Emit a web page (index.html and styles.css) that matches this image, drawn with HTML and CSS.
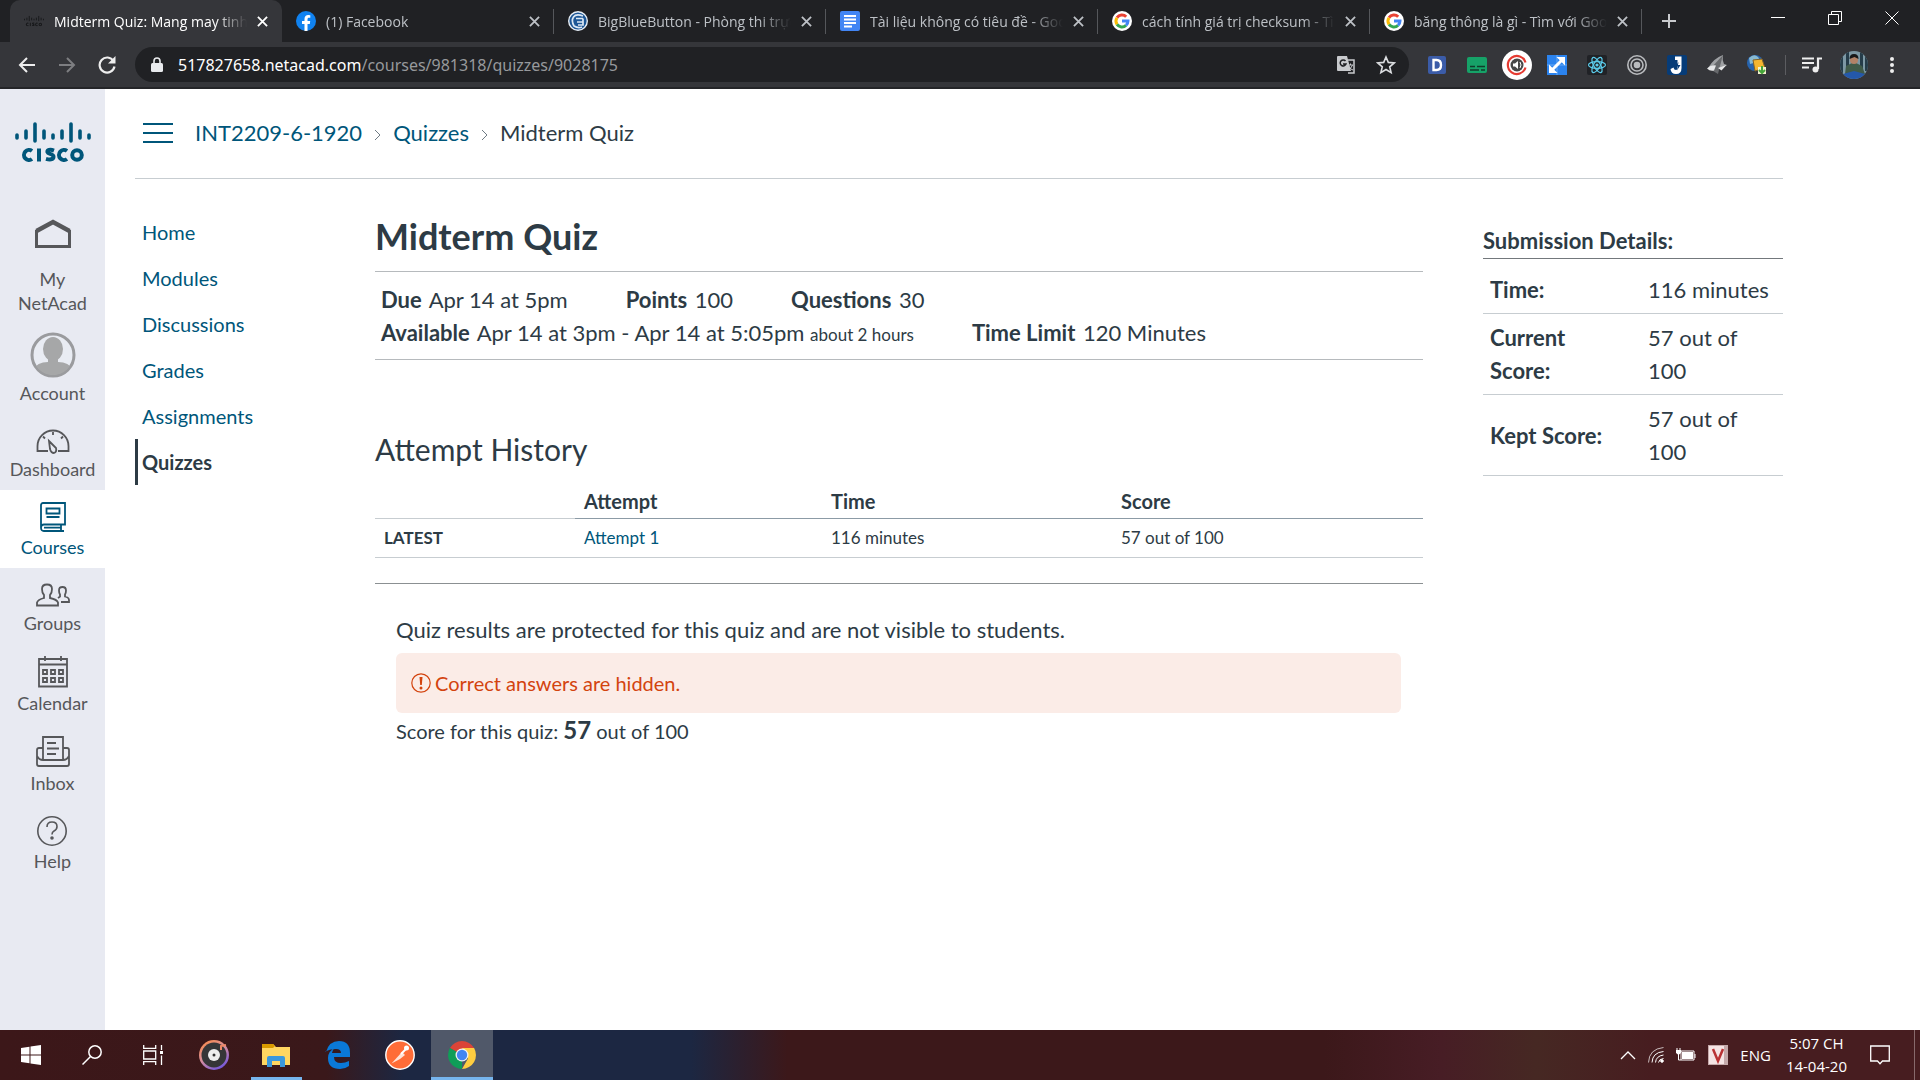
FILE: index.html
```html
<!DOCTYPE html>
<html lang="en">
<head>
<meta charset="utf-8">
<title>Midterm Quiz: Mang may tinh</title>
<link rel="stylesheet" href="styles.css">
</head>
<body>
<svg class="sprite" aria-hidden="true">
  <symbol id="close" viewBox="0 0 12 12"><path d="M1 1l10 10M11 1L1 11" stroke="currentColor" stroke-width="2" fill="none"/></symbol>
  <symbol id="google" viewBox="0 0 20 20"><circle cx="10" cy="10" r="10" fill="#fff"/><g fill="none" stroke-width="3"><path d="M5 6.7A6 6 0 0 1 14.2 5.8" stroke="#ea4335"/><path d="M5 13.3A6 6 0 0 1 5 6.7" stroke="#fbbc05"/><path d="M14 14.4A6 6 0 0 1 5 13.3" stroke="#34a853"/><path d="M10 10h6a6 6 0 0 1-2 4.4" stroke="#4285f4"/></g></symbol>
  <symbol id="cisco" viewBox="0 0 76 40"><g stroke="currentColor" stroke-width="3.6" stroke-linecap="round"><path d="M2 13v3M11 9v7M20 2v17M29 9v7M38 13v3M47 9v7M56 2v17M65 9v7M74 13v3"/></g><g fill="none" stroke="currentColor" stroke-width="4"><path d="M17 29a5 5 0 1 0 0 8M24 26.500v13M39 28.600c-4-1.500-7-.6-6.500 1.600.6 2 6 1.600 6 4.600 0 3-4 3-7.500 2M52 29a5 5 0 1 0 0 8"/><circle cx="62" cy="33" r="4.800"/></g></symbol>
</svg>

<header class="browser">
  <div class="tabs">
    <div class="tab tab-active"><svg class="favicon dim" viewBox="0 0 76 40"><use href="#cisco"/></svg><span class="tab-title">Midterm Quiz: Mang may tinh</span><button class="tab-close" aria-label="Close tab"><svg><use href="#close"/></svg></button></div>
    <div class="tab"><svg class="favicon" viewBox="0 0 20 20"><circle cx="10" cy="10" r="10" fill="#1082f0"/><path d="M8.500 20v-7H6v-3h2.500V8c0-2.600 1.500-4 3.800-4l2 .2v2.500h-1.200c-1.200 0-1.600.7-1.600 1.500V10h2.700l-.4 3h-2.300v7z" fill="#fff"/></svg><span class="tab-title">(1) Facebook</span><button class="tab-close" aria-label="Close tab"><svg><use href="#close"/></svg></button></div>
    <div class="tab"><svg class="favicon" viewBox="0 0 20 20"><circle cx="10" cy="10" r="9.300" fill="#1d5796" stroke="#e8eef5" stroke-width="1.400"/><path d="M15 5Q8 2.500 5.500 6T6 15q4 2.500 8 1M8 7.500h7M9 11h6M15 7.500V14h-5" fill="none" stroke="#dce8f4" stroke-width="1.700"/></svg><span class="tab-title">BigBlueButton - Phòng thi trực tuyến</span><button class="tab-close" aria-label="Close tab"><svg><use href="#close"/></svg></button></div>
    <div class="tab"><svg class="favicon" viewBox="0 0 20 20"><rect width="20" height="20" rx="2" fill="#4285f4"/><path d="M4 5h12M4 8.500h12M4 12h12M4 15.500h8" stroke="#fff" stroke-width="2"/></svg><span class="tab-title">Tài liệu không có tiêu đề - Google Tài liệu</span><button class="tab-close" aria-label="Close tab"><svg><use href="#close"/></svg></button></div>
    <div class="tab"><svg class="favicon"><use href="#google"/></svg><span class="tab-title">cách tính giá trị checksum - Tìm với Google</span><button class="tab-close" aria-label="Close tab"><svg><use href="#close"/></svg></button></div>
    <div class="tab"><svg class="favicon"><use href="#google"/></svg><span class="tab-title">băng thông là gì - Tìm với Google</span><button class="tab-close" aria-label="Close tab"><svg><use href="#close"/></svg></button></div>
    <button class="new-tab" aria-label="New tab"><svg width="16" height="16" viewBox="0 0 16 16"><path d="M8 1v14M1 8h14" stroke="currentColor" stroke-width="2"/></svg></button>
    <div class="window-controls">
      <button aria-label="Minimize"><svg width="14" height="14" viewBox="0 0 14 14"><path d="M0 6.500h14" stroke="currentColor"/></svg></button>
      <button aria-label="Restore"><svg width="14" height="14" viewBox="0 0 14 14"><path d="M.5 3.500h10v10H.5zM3.500 3.500v-3h10v10h-3" fill="none" stroke="currentColor"/></svg></button>
      <button aria-label="Close"><svg width="14" height="14" viewBox="0 0 14 14"><path d="M.5.5l13 13M13.500.5l-13 13" stroke="currentColor"/></svg></button>
    </div>
  </div>
  <div class="toolbar">
    <button class="nav-button" aria-label="Back"><svg width="18" height="18" viewBox="0 0 18 18"><path d="M17 9H2M9 2L2 9l7 7" fill="none" stroke="currentColor" stroke-width="2"/></svg></button>
    <button class="nav-button faded" aria-label="Forward"><svg width="18" height="18" viewBox="0 0 18 18"><path d="M1 9h15M9 2l7 7-7 7" fill="none" stroke="currentColor" stroke-width="2"/></svg></button>
    <button class="nav-button" aria-label="Reload"><svg width="18" height="18" viewBox="0 0 18 18"><path d="M15.500 5A7.500 7.500 0 1 0 16.500 10.500" fill="none" stroke="currentColor" stroke-width="2.200"/><path d="M17.500 0v7.500H10z" fill="currentColor"/></svg></button>
    <div class="omnibox">
      <svg width="12" height="16" viewBox="0 0 12 16"><rect y="6" width="12" height="9" rx="1.500" fill="#e8eaed"/><path d="M3 7V4a3 3 0 0 1 6 0v3" fill="none" stroke="#e8eaed" stroke-width="1.600"/></svg>
      <span class="url"><b>517827658.netacad.com</b>/courses/981318/quizzes/9028175</span>
      <button aria-label="Translate this page"><svg width="20" height="20" viewBox="0 0 20 20"><path d="M2 1h9l4 15H2a1 1 0 0 1-1-1V2a1 1 0 0 1 1-1z" fill="#c8cacd"/><path d="M12 5h6v13h-6" fill="none" stroke="#c8cacd" stroke-width="1.500"/><path d="M9.500 6A3 3 0 1 0 10 9H7" fill="none" stroke="#202124" stroke-width="1.500"/><path d="M12 10h5M14.500 8.500V10M16.500 10q-1 3-4 5M13 11.500q1.500 3 4 3.500" fill="none" stroke="#c8cacd"/></svg></button>
      <button aria-label="Bookmark this tab"><svg width="20" height="20" viewBox="0 0 20 20"><path d="M10 2l2.300 5.400 5.900.5-4.500 3.900 1.400 5.800-5.100-3.100-5.100 3.100 1.400-5.800L1.800 7.900l5.900-.5z" fill="none" stroke="#dcdee1" stroke-width="1.600"/></svg></button>
    </div>
    <div class="extensions">
      <button aria-label="Dictionary"><svg viewBox="0 0 30 30"><rect x="6" y="6" width="18" height="18" rx="2" fill="#3b5ca8"/><path d="M11.500 10h3q4.500 0 4.500 5t-4.500 5h-3z" fill="none" stroke="#fff" stroke-width="2.400"/></svg></button>
      <button aria-label="Subtitles"><svg viewBox="0 0 30 30"><rect x="5" y="7" width="20" height="16" rx="2" fill="#16a268"/><path d="M8 16.500h5M15 16.500h8M8 20h9M19 20h4" stroke="#113c2b" stroke-width="1.500"/></svg></button>
      <button aria-label="Volume"><svg viewBox="0 0 30 30"><circle cx="15" cy="15" r="15" fill="#fff"/><circle cx="15" cy="15" r="6.500" fill="#484848"/><path d="M23.500 12.500a9 9 0 1 0 0 5" fill="none" stroke="#e53b32" stroke-width="2.200"/><path d="M11 13.500h2l3-2.500v8l-3-2.500h-2z" fill="#fff"/><path d="M18 12q2 3 0 6" fill="none" stroke="#fff"/></svg></button>
      <button aria-label="Resize"><svg viewBox="0 0 30 30"><rect x="5" y="5" width="20" height="20" fill="#2b83ee"/><path d="M15 5v20M5 15h20" stroke="#69aaf5"/><path d="M10.500 19.500l9-9" stroke="#fff" stroke-width="3"/><path d="M14.500 7H23v8.500zM7 14.500V23h8.500z" fill="#fff"/></svg></button>
      <button aria-label="React tools"><svg viewBox="0 0 30 30"><rect x="5" y="5" width="20" height="20" rx="2" fill="#202226"/><g fill="none" stroke="#5ccdec" stroke-width="1.200"><ellipse cx="15" cy="15" rx="8.500" ry="3.300"/><ellipse cx="15" cy="15" rx="8.500" ry="3.300" transform="rotate(60 15 15)"/><ellipse cx="15" cy="15" rx="8.500" ry="3.300" transform="rotate(120 15 15)"/></g><circle cx="15" cy="15" r="1.600" fill="#5ccdec"/></svg></button>
      <button aria-label="Recorder"><svg viewBox="0 0 30 30" fill="none" stroke="#b9bbbe" stroke-width="1.600"><circle cx="15" cy="15" r="9.200"/><circle cx="15" cy="15" r="6"/><circle cx="15" cy="15" r="2.500" fill="#b9bbbe"/></svg></button>
      <button aria-label="Downloader"><svg viewBox="0 0 30 30"><rect x="5" y="5" width="20" height="20" rx="2" fill="#063c78"/><path d="M13 6.500h6.500V18q0 6-5.500 6-5 0-5.500-5l3-1.500q.5 2.500 2.500 2.500 1.500 0 1.500-2V10H13z" fill="#fff"/><path d="M16.500 12l-3 4.500h2.500l-1 4 3.500-5.500H16z" fill="#063c78"/></svg></button>
      <button aria-label="Clipper"><svg viewBox="0 0 30 30"><path d="M6 18Q12 8 21 5q-1 5 1 9l3 1-6 4z" fill="#9fa1a4"/><path d="M10 17l11-12-3 11-2 8-5-3z" fill="#67696c"/><path d="M5 18.500q4-4 9-3l-2 5q-4 1-7-2zM16 18l8.500-3-5 5.500z" fill="#e6e7e8"/></svg></button>
      <button aria-label="Download manager"><svg viewBox="0 0 30 30"><circle cx="13" cy="13" r="8" fill="#2764ae"/><path d="M7 8q5-5 9-1t-8 7z" fill="#89b9cf"/><path d="M11 10l9-1 3 9-10 3z" fill="#f5b62f" stroke="#806128"/><path d="M16 17h8v7h-8z" fill="#f5f1cf"/><path d="M20 16v6M17 20l3 3 3-3" fill="none" stroke="#45a639" stroke-width="2"/></svg></button>
    </div>
    <div class="profile">
      <button aria-label="Media controls"><svg width="22" height="20" viewBox="0 0 22 20"><path d="M1 3.500h12M1 8h12M1 12.500h7M17 14V3.500h4" fill="none" stroke="#eee" stroke-width="2.200"/><circle cx="14.500" cy="14.500" r="3" fill="#eee"/></svg></button>
      <button aria-label="Profile"><svg width="28" height="28" viewBox="0 0 28 28"><clipPath id="round"><circle cx="14" cy="14" r="14"/></clipPath><g clip-path="url(#round)"><path d="M0 0h28v28H0z" fill="#7d98a4"/><path d="M0 0h3v28H0zM6 0h3v16H6zM20 0h3v20h-3zM25 0h3v20h-3z" fill="#253c49"/><path d="M6 15l8-4 8 4 3 8H5z" fill="#405b49"/><circle cx="14" cy="9" r="4" fill="#b28267"/><path d="M9.500 8q0-5 4.500-5t4.500 5l-4-2z" fill="#171819"/><path d="M3 23l11-3 11 3-3 5H6z" fill="#2458aa"/></g></svg></button>
      <button aria-label="Menu"><svg width="6" height="18" viewBox="0 0 6 18" fill="#eee"><circle cx="3" cy="3" r="2"/><circle cx="3" cy="9" r="2"/><circle cx="3" cy="15" r="2"/></svg></button>
    </div>
  </div>
</header>

<div class="page">
  <nav class="global-nav" aria-label="Global">
    <a class="logo" href="#" aria-label="Cisco"><svg width="76" height="40"><use href="#cisco"/></svg></a>
    <a class="nav-item nav-home" href="#"><svg width="36" height="30" viewBox="0 0 36 30" fill="none" stroke="currentColor"><path d="M1.500 11v16.500h33V11" stroke-width="3"/><path d="M1.500 12L18 3l16.500 9" stroke-width="4.500"/></svg>My NetAcad</a>
    <a class="nav-item" href="#"><svg width="46" height="46" viewBox="0 0 46 46"><clipPath id="person"><circle cx="23" cy="23" r="20"/></clipPath><circle cx="23" cy="23" r="21" fill="#e9ecf3" stroke="#9a9b9e" stroke-width="3"/><g fill="#a6a7a8" clip-path="url(#person)"><ellipse cx="23" cy="17" rx="10" ry="12"/><path d="M18 26h10v4q11 0 15 8L35 46H10L3 38q4-8 15-8z"/></g></svg>Account</a>
    <a class="nav-item" href="#"><svg width="34" height="28" viewBox="0 0 34 28" fill="none" stroke="currentColor" stroke-width="1.800"><path d="M12 25H1.500v-5a15.500 15.500 0 0 1 31 0v5H22M17 6v3M7 10.500l2 2M27 10.500l-2 2M13 15l7 7q1 4-2 5-3 0-4-4z"/></svg>Dashboard</a>
    <a class="nav-item nav-current" href="#" aria-current="true"><svg width="26" height="30" viewBox="0 0 26 30" fill="none" stroke="currentColor" stroke-width="1.800"><path d="M1 25.500V3a2 2 0 0 1 2-2h22v21.500H4q-3 0-3 3.300T4 29h20M4 25.700h17M21 22.500V29M6.500 6.500h13v5h-13zM6.500 15h13"/></svg>Courses</a>
    <a class="nav-item" href="#"><svg width="34" height="28" viewBox="0 0 34 28" fill="none" stroke="currentColor" stroke-width="1.800"><path d="M1 25.500v-3q1-3 7-4.500v-3q-2-2-2-6 0-4.500 5-4.500t5 4.500q0 4-2 6v3q7 1.500 8 4.500v3zM22 18l2-1.500v-2q-1-1.500-1-4 0-3.500 3.500-3.500t3.500 3.500q0 2.500-1 4v2q4 1 4 3.500v2h-8"/></svg>Groups</a>
    <a class="nav-item" href="#"><svg width="30" height="32" viewBox="0 0 30 32" fill="none" stroke="currentColor" stroke-width="1.800"><path d="M1 3h28v27.500H1zM1 8.500h28M7 0v5M23 0v5M5 14h4v4H5zM13 14h4v4h-4zM21 14h4v4h-4zM5 22h4v4H5zM13 22h4v4h-4zM21 22h4v4h-4z"/></svg>Calendar</a>
    <a class="nav-item" href="#"><svg width="34" height="32" viewBox="0 0 34 32" fill="none" stroke="currentColor" stroke-width="1.800"><path d="M7 24V1h20v23zM11 7h9M11 12.500h12M11 18h9M7 12H3q-2 0-2 2v14q0 2 2 2h28q2 0 2-2V14q0-2-2-2h-4M1 20q2 4 6 4M33 20q-2 4-6 4"/></svg>Inbox</a>
    <a class="nav-item" href="#"><svg width="32" height="30" viewBox="0 0 32 30" fill="none" stroke="currentColor" stroke-width="1.600"><circle cx="15" cy="15" r="14.200"/><path d="M10 11q0-5 5-5t5 4.500q0 3-3 4.500-2 1-2 3.500"/><circle cx="15" cy="22" r="1" fill="currentColor"/></svg>Help</a>
  </nav>

  <div class="content">
    <div class="crumb-bar">
      <button class="menu-toggle" aria-label="Course navigation"><svg width="30" height="20" viewBox="0 0 30 20"><path d="M0 1h30M0 10h30M0 19h30" stroke="currentColor" stroke-width="2"/></svg></button>
      <nav class="crumbs" aria-label="Breadcrumbs"><a href="#">INT2209-6-1920</a><svg viewBox="0 0 7 12"><path d="M1 1l5 5-5 5"/></svg><a href="#">Quizzes</a><svg viewBox="0 0 7 12"><path d="M1 1l5 5-5 5"/></svg><span>Midterm Quiz</span></nav>
    </div>
    <div class="columns">
      <nav class="course-menu" aria-label="Course"><a href="#">Home</a><a href="#">Modules</a><a href="#">Discussions</a><a href="#">Grades</a><a href="#">Assignments</a><a class="selected" href="#">Quizzes</a></nav>
      <main class="quiz">
        <h1>Midterm Quiz</h1>
        <ul class="details">
          <li><b>Due</b> Apr 14 at 5pm</li><li><b>Points</b> 100</li><li><b>Questions</b> 30</li>
          <li class="row-start"><b>Available</b> Apr 14 at 3pm - Apr 14 at 5:05pm <small>about 2 hours</small></li><li><b>Time Limit</b> 120 Minutes</li>
        </ul>
        <h2>Attempt History</h2>
        <table class="attempts">
          <thead><tr><td></td><th scope="col">Attempt</th><th scope="col">Time</th><th scope="col">Score</th></tr></thead>
          <tbody><tr><th scope="row">LATEST</th><td><a href="#">Attempt 1</a></td><td>116 minutes</td><td>57 out of 100</td></tr></tbody>
        </table>
        <section class="results">
          <p class="notice">Quiz results are protected for this quiz and are not visible to students.</p>
          <p class="alert"><svg width="20" height="20" viewBox="0 0 20 20"><circle cx="10" cy="10" r="9.200" fill="none" stroke="currentColor" stroke-width="1.200"/><path d="M8.500 4h3l-.7 8H9.200z" fill="currentColor"/><circle cx="10" cy="15" r="1.500" fill="currentColor"/></svg>Correct answers are hidden.</p>
          <p class="score">Score for this quiz: <b>57</b> out of 100</p>
        </section>
      </main>
      <aside class="submission">
        <h3>Submission Details:</h3>
        <table><tbody>
          <tr><th scope="row">Time:</th><td>116 minutes</td></tr>
          <tr><th scope="row">Current Score:</th><td>57 out of 100</td></tr>
          <tr><th scope="row">Kept Score:</th><td>57 out of 100</td></tr>
        </tbody></table>
      </aside>
    </div>
  </div>
</div>

<footer class="taskbar">
  <div class="apps">
    <button class="system" aria-label="Start"><svg width="20" height="20" viewBox="0 0 20 20" fill="#fff"><path d="M0 3l8.500-1.200V9.500H0zM9.500 1.600L20 0v9.500H9.500zM0 10.500h8.500v7.700L0 17zM9.500 10.500H20V20L9.500 18.400z"/></svg></button>
    <button class="system" aria-label="Search"><svg width="20" height="20" viewBox="0 0 20 20" fill="none" stroke="#fff" stroke-width="1.500"><circle cx="13" cy="7" r="6.200"/><path d="M8.500 11.500L.5 19.500"/></svg></button>
    <button class="system" aria-label="Task view"><svg width="20" height="20" viewBox="0 0 20 20" fill="none" stroke="#fff" stroke-width="1.300"><path d="M.7 0v3.300h12V0M.7 6h12v8H.7zM.7 20v-3.300h12V20M18.500 0v5M18.500 10.500V20"/><path d="M17 6h3v3h-3z" fill="#fff" stroke="none"/></svg></button>
    <button aria-label="Music"><svg width="30" height="30" viewBox="0 0 30 30"><linearGradient id="ring" x2=".6" y2="1"><stop stop-color="#ff8a3c"/><stop offset=".55" stop-color="#d78fa0"/><stop offset="1" stop-color="#7759d8"/></linearGradient><circle cx="15" cy="15" r="15" fill="url(#ring)"/><circle cx="15" cy="15" r="12.500" fill="#353638"/><path d="M22 10V6l5-1" fill="none" stroke="#ee8866" stroke-width="2"/><circle cx="15" cy="15" r="6" fill="#eee"/><circle cx="15" cy="15" r="1.500" fill="#333"/></svg></button>
    <button class="running" aria-label="File Explorer"><svg width="28" height="24" viewBox="0 0 28 24"><path d="M0 1h11l3 3h14v18H0z" fill="#ffd661"/><path d="M0 1h11l2 2-2 2H0z" fill="#d99a00"/><path d="M5 24V15q0-2 2-2h14q2 0 2 2v9h-5v-6h-8v6z" fill="#3b98dc"/></svg></button>
    <button aria-label="Edge"><svg width="26" height="28" viewBox="0 0 26 28"><path d="M1 11Q4 0 14 0q11 0 11 12v4H9q0 6 7 6 4 0 8-2v5q-4 3-9 3-12 0-12-11 0-7 7-10-3 2-3 5h9q0-4-5-4-7 0-11 3z" fill="#0a79d8"/></svg></button>
    <button aria-label="Postman"><svg width="30" height="30" viewBox="0 0 30 30"><circle cx="15" cy="15" r="14.200" fill="#ff6c37" stroke="#fff" stroke-width="1.400"/><path d="M6.500 23.500L17 12l3 3-5 4z" fill="#ffe3d8"/><path d="M16 14l6-6" stroke="#fff" stroke-width="2"/><circle cx="21.500" cy="8" r="2.500" fill="#fff"/></svg></button>
    <button class="focused" aria-label="Chrome"><svg width="28" height="28" viewBox="0 0 28 28"><path d="M14 14L1.900 7A14 14 0 0 1 26.100 7z" fill="#db4437"/><path d="M14 14V28A14 14 0 0 1 1.900 7z" fill="#0f9d58"/><path d="M14 7h12.100A14 14 0 0 1 14 28l6-10.500z" fill="#ffcd40"/><circle cx="14" cy="14" r="6.500" fill="#f1f1f1"/><circle cx="14" cy="14" r="5.200" fill="#4285f4"/></svg></button>
  </div>
  <div class="tray">
    <svg width="16" height="10" viewBox="0 0 16 10" fill="none" stroke="#fff" stroke-width="1.300"><path d="M1 9l7-7 7 7"/></svg>
    <svg width="16" height="16" viewBox="0 0 16 16" fill="none" stroke="#fff"><path d="M.5 15.500Q1 2 15.500.5" opacity=".7"/><path d="M4 15.500Q4.500 5.500 15.500 4.500M7.500 15.500Q8 9 15.500 8M10.500 15.500Q11 12 15.500 11.500"/><circle cx="14" cy="14" r="1.300" fill="#fff"/></svg>
    <svg width="20" height="14" viewBox="0 0 20 14"><path d="M5 3h13v9H5zM19 6v4" fill="none" stroke="#fff"/><path d="M6 4h11v7H6z" fill="#fff"/><path d="M0 2h5v3L2.500 7 0 5z" fill="#fff"/><path d="M1 0v3M4 0v3M2.500 6v6H5" fill="none" stroke="#fff"/></svg>
    <svg width="20" height="20" viewBox="0 0 20 20"><rect width="20" height="20" fill="#c5a9aa"/><path d="M1 1h15v18H1z" fill="#f5e4e4"/><path d="M5 4l5 12 5-12" fill="none" stroke="#b93234" stroke-width="2.500"/></svg>
    <span>ENG</span>
    <time class="clock">5:07 CH<br>14-04-20</time>
    <svg width="20" height="20" viewBox="0 0 20 20"><path d="M.7 1h18.600v15h-6.800L10 18.700 7.500 16H.7z" fill="none" stroke="#fff" stroke-width="1.300"/></svg>
  </div>
</footer>
</body>
</html>
```
FILE: styles.css
```css
* { box-sizing: border-box; }
body {
  margin: 0;
  min-height: 100vh;
  display: flex;
  flex-direction: column;
  font-family: Lato, "Liberation Sans", sans-serif;
  color: #2d3b45;
  background: #fff;
}
button { border: 0; padding: 0; background: none; color: inherit; font: inherit; display: grid; place-items: center; }
a { color: #00567a; text-decoration: none; }
h1, h2, h3, p, ul { margin: 0; padding: 0; }
table { border-collapse: collapse; width: 100%; }
th { text-align: left; }
.sprite { position: absolute; width: 0; height: 0; }

/* Browser frame */
.browser { background: #202124; color: #dfe1e5; font-family: "Open Sans", "Noto Sans", sans-serif; border-bottom: 2px solid #242528; }
.tabs { display: flex; height: 42px; padding-left: 10px; }
.tab { flex: 0 1 272px; display: flex; align-items: center; gap: 10px; padding: 0 14px; min-width: 0; font-size: 14px; color: #bdc1c6; position: relative; }
.tab:not(.tab-active)::after { content: ""; position: absolute; right: 0; top: 9px; height: 25px; width: 1px; background: #55575b; }
.tab-active { background: #35363a; color: #fff; border-radius: 10px 10px 0 0; }
.favicon { width: 20px; height: 20px; flex: none; }
.dim { color: #17181a; }
.tab-title { flex: 1; overflow: hidden; white-space: nowrap; -webkit-mask-image: linear-gradient(90deg, #000 calc(100% - 32px), transparent); mask-image: linear-gradient(90deg, #000 calc(100% - 32px), transparent); }
.tab-close svg { width: 11px; height: 11px; display: block; }
.new-tab { width: 54px; color: #c8cacd; }
.window-controls { margin-left: auto; display: flex; height: 36px; color: #fff; }
.window-controls button { width: 57px; }

.toolbar { background: #35363a; height: 45px; padding: 0 25px 0 7px; display: flex; align-items: center; }
.nav-button { width: 40px; height: 40px; color: #eee; }
.faded { color: #7d7e81; }
.omnibox { flex: 1; height: 35px; margin: 0 13px 0 8px; padding: 0 13px 0 16px; border-radius: 18px; background: #202124; display: flex; align-items: center; gap: 15px; }
.omnibox button + button { margin-left: 5px; }
.url { flex: 1; font-family: "Noto Sans", "Open Sans", sans-serif; font-size: 16px; color: #97999c; }
.url b { font-weight: 400; color: #fff; }
.extensions { display: flex; gap: 10px; padding-right: 13px; }
.extensions svg { width: 30px; height: 30px; display: block; }
.profile { display: flex; align-items: center; border-left: 1px solid #5c5d61; height: 20px; padding-left: 15px; }
.profile button { margin-right: 17px; }
.profile button:nth-child(2) { margin-right: 21px; }
.profile button:last-child { margin-right: 0; }

/* Page */
.page { flex: 1; display: flex; }
.global-nav { width: 105px; flex: none; background: #e8eaf2; display: flex; flex-direction: column; }
.logo { color: #00567a; display: grid; justify-content: center; padding: 33px 0 45px; }
.nav-item { display: flex; flex-direction: column; align-items: center; gap: 4px; padding: 12px 16px 10px; font-size: 18px; line-height: 22px; text-align: center; color: #56575a; }
.nav-home { gap: 18px; line-height: 24px; padding: 12px 16px 5px; }
.nav-current { background: #fff; color: #00567a; }
.content { flex: 1; padding: 0 137px 0 30px; min-width: 0; }
.crumb-bar { height: 90px; display: flex; align-items: center; gap: 22px; padding: 0 0 2px 8px; border-bottom: 1px solid #c7cdd1; }
.menu-toggle { color: #00567a; }
.crumbs { display: flex; align-items: center; gap: 12px; font-size: 22px; line-height: 32px; }
.crumbs svg { width: 7px; height: 12px; fill: none; stroke: #6f7b84; margin-top: 4px; }

.columns { display: flex; }
.course-menu { width: 240px; flex: none; padding-top: 30px; }
.course-menu a { display: block; padding: 0 0 0 4px; border-left: 3px solid transparent; font-size: 20px; line-height: 46px; }
.course-menu .selected { border-color: #2d3b45; color: #2d3b45; font-weight: 700; }

.quiz { flex: 1; min-width: 0; padding-top: 33px; }
h1 { font-size: 36px; line-height: 48px; padding-bottom: 11px; }
.details { list-style: none; display: flex; flex-wrap: wrap; column-gap: 58px; padding: 11px 6px 10px; border: solid #b6babd; border-width: 1px 0; font-size: 22px; line-height: 33px; }
.details b { margin-right: 2px; }
.details small { font-size: 17px; line-height: 22px; }
.details::before { content: ""; order: 1; flex-basis: 100%; }
.details .row-start, .details .row-start + li { order: 2; }
h2 { font-size: 30px; font-weight: 400; line-height: 40px; margin-top: 69px; }
.attempts { table-layout: fixed; margin-top: 13px; font-size: 17px; line-height: 22px; }
.attempts th, .attempts td { padding: 8px 9px; border-bottom: 1px solid #c7cdd1; text-align: left; }
.attempts thead th { font-size: 20px; padding-bottom: 6px; border-color: #8c9ba6; }
.attempts tr > :nth-child(1) { width: 200px; }
.attempts tr > :nth-child(2) { width: 247px; }
.attempts tr > :nth-child(3) { width: 290px; }
.results { margin-top: 25px; padding: 30px 22px 30px 21px; border-top: 1px solid #8b9092; }
.notice { font-size: 22px; line-height: 32px; }
.alert { margin: 7px 0 2px; padding: 0 15px; height: 60px; display: flex; align-items: center; gap: 4px; background: #fbece7; color: #d3430e; border-radius: 6px; font-size: 20px; }
.score { font-size: 20px; line-height: 32px; }
.score b { font-size: 24px; line-height: 24px; }

.submission { flex: none; width: 300px; margin-left: 60px; padding-top: 46px; }
.submission h3 { font-size: 22px; line-height: 32px; padding-bottom: 1px; border-bottom: 1px solid #73787c; margin-bottom: 7px; }
.submission table { table-layout: fixed; font-size: 22px; line-height: 33px; }
.submission th, .submission td { padding: 7px; border-bottom: 1px solid #c7cdd1; }
.submission th { width: 158px; padding-right: 30px; }

/* Desktop taskbar */
.taskbar { height: 50px; display: flex; justify-content: space-between; color: #fff; font-family: "Open Sans", "Noto Sans", sans-serif; font-size: 15px; background: linear-gradient(90deg, #3c1719 0, #3a181a 17%, #1c2742 21%, #1c2742 36%, #3c181a 41%, #3c181a 69%, #471d25 75%, #462823 80%, #471d20 86%, #471d20 100%); }
.apps { display: flex; }
.apps button { width: 62px; height: 50px; }
.apps .system { width: 61px; }
.running { background: linear-gradient(#76b5ee, #76b5ee) center bottom / 51px 3px no-repeat; }
.focused { background: #505869; box-shadow: inset 0 -3px #76b5ee; }
.apps .running { background: linear-gradient(#76b5ee, #76b5ee) center bottom / 51px 3px no-repeat; }
.tray { display: flex; align-items: center; gap: 12px; padding-right: 24px; margin-right: 5px; border-right: 1px solid #87696b; }
.clock { text-align: center; line-height: 23px; margin: 0 11px 0 3px; }
```
